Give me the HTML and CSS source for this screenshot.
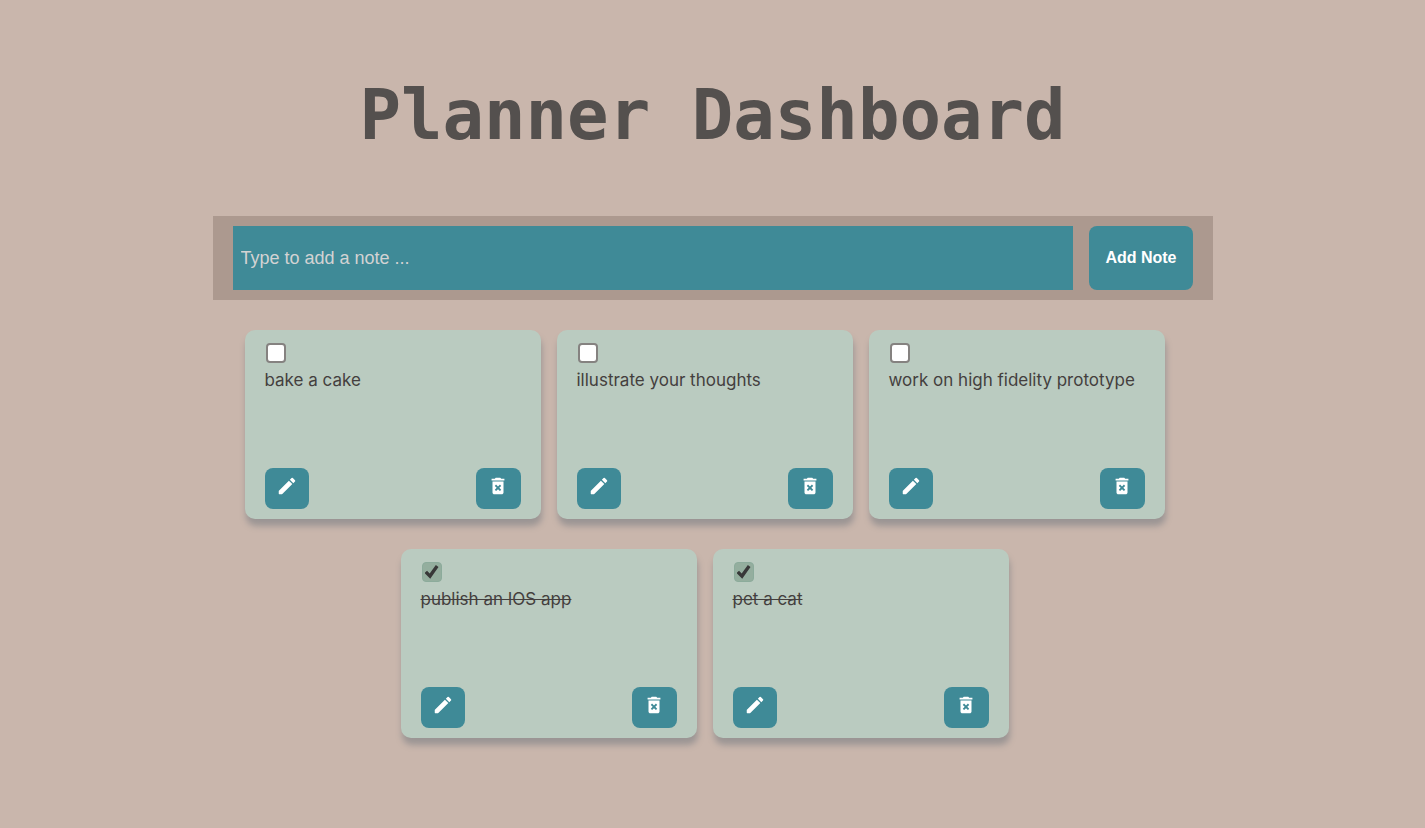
FILE: index.html
```html
<!DOCTYPE html>
<html lang="en">
<head>
<meta charset="utf-8">
<meta name="viewport" content="width=device-width, initial-scale=1">
<title>Planner Dashboard</title>
<link rel="stylesheet" href="styles.css">
</head>
<body>
<svg class="sprite" aria-hidden="true">
  <symbol id="pencil" viewBox="0 0 24 24"><path d="M3 17.460v3.040c0 .28.22.5.5.5h3.040c.13 0 .26-.05.35-.15L17.810 9.940l-3.750-3.750L3.150 17.100c-.1.1-.15.22-.15.36zM20.710 7.040a1 1 0 0 0 0-1.410l-2.340-2.340a1 1 0 0 0-1.410 0l-1.830 1.830 3.750 3.750 1.830-1.830z"/></symbol>
  <symbol id="trash" viewBox="0 0 24 24"><path d="M6 19c0 1.100.9 2 2 2h8c1.100 0 2-.9 2-2V7H6v12zm2.460-7.120 1.410-1.410L12 12.590l2.120-2.120 1.410 1.410L13.410 14l2.120 2.120-1.410 1.410L12 15.410l-2.120 2.120-1.410-1.410L10.590 14l-2.130-2.120zM15.500 4l-1-1h-5l-1 1H5v2h14V4z"/></symbol>
</svg>
<main class="planner">
  <h1 class="title">Planner Dashboard</h1>
  <form class="note-form">
    <input class="note-input" type="text" placeholder="Type to add a note ..." aria-label="New note">
    <button class="button add-button" type="button">Add Note</button>
  </form>
  <ul class="notes">
    <li class="note">
      <label class="note-label"><input class="note-check" type="checkbox"><span class="note-text">bake a cake</span></label>
      <div class="actions">
        <button class="button icon-button" type="button" aria-label="Edit"><svg class="icon"><use href="#pencil"/></svg></button>
        <button class="button icon-button delete-button" type="button" aria-label="Delete"><svg class="icon"><use href="#trash"/></svg></button>
      </div>
    </li>
    <li class="note">
      <label class="note-label"><input class="note-check" type="checkbox"><span class="note-text">illustrate your thoughts</span></label>
      <div class="actions">
        <button class="button icon-button" type="button" aria-label="Edit"><svg class="icon"><use href="#pencil"/></svg></button>
        <button class="button icon-button delete-button" type="button" aria-label="Delete"><svg class="icon"><use href="#trash"/></svg></button>
      </div>
    </li>
    <li class="note">
      <label class="note-label"><input class="note-check" type="checkbox"><span class="note-text">work on high fidelity prototype</span></label>
      <div class="actions">
        <button class="button icon-button" type="button" aria-label="Edit"><svg class="icon"><use href="#pencil"/></svg></button>
        <button class="button icon-button delete-button" type="button" aria-label="Delete"><svg class="icon"><use href="#trash"/></svg></button>
      </div>
    </li>
    <li class="note">
      <label class="note-label"><input class="note-check" type="checkbox" checked><span class="note-text">publish an IOS app</span></label>
      <div class="actions">
        <button class="button icon-button" type="button" aria-label="Edit"><svg class="icon"><use href="#pencil"/></svg></button>
        <button class="button icon-button delete-button" type="button" aria-label="Delete"><svg class="icon"><use href="#trash"/></svg></button>
      </div>
    </li>
    <li class="note">
      <label class="note-label"><input class="note-check" type="checkbox" checked><span class="note-text">pet a cat</span></label>
      <div class="actions">
        <button class="button icon-button" type="button" aria-label="Edit"><svg class="icon"><use href="#pencil"/></svg></button>
        <button class="button icon-button delete-button" type="button" aria-label="Delete"><svg class="icon"><use href="#trash"/></svg></button>
      </div>
    </li>
  </ul>
</main>
</body>
</html>
```
FILE: styles.css
```css
* {
  box-sizing: border-box;
}

body {
  margin: 0;
  background: #c9b6ac;
  color: #443f3e;
  font-family: Inter, "Liberation Sans", sans-serif;
}

.sprite {
  display: none;
}

.planner {
  max-width: 1000px;
  margin: 0 auto;
  padding-top: 76px;
}

.title {
  margin: 0 0 62px;
  color: #54504e;
  font: bold 69px/78px "DejaVu Sans Mono", monospace;
  text-align: center;
}

.note-form {
  display: flex;
  gap: 16px;
  padding: 10px 20px;
  background: #ac998f;
}

.note-input {
  flex: 1;
  min-width: 0;
  height: 64px;
  padding: 0 8px;
  border: 0;
  background: #3f8a97;
  color: #fff;
  font: 18px "Liberation Sans", sans-serif;
}

.note-input::placeholder {
  color: #d3d3d3;
}

.button {
  border: 0;
  border-radius: 8px;
  background: #3f8a97;
  color: #fff;
}

.add-button {
  padding: 0 16px;
  font: bold 16px "Liberation Sans", sans-serif;
}

.notes {
  display: flex;
  flex-wrap: wrap;
  justify-content: center;
  margin: 30px 0 0;
  padding: 0;
  list-style: none;
}

.note {
  display: flex;
  flex-direction: column;
  justify-content: space-between;
  width: 296px;
  min-height: 189px;
  margin: 0 16px 30px 0;
  padding: 12px 20px 10px;
  border-radius: 10px;
  background: #bacbc0;
  box-shadow: 1px 7px 6px #9b9594;
}

.note-label {
  display: flex;
  flex-direction: column;
  gap: 4px;
}

.note-check {
  display: grid;
  place-items: center;
  width: 20px;
  height: 20px;
  margin: 1px;
  appearance: none;
  border: 2px solid #858280;
  border-radius: 4px;
  background: #fff;
}

.note-check:checked {
  border: 1px solid #8cab9b;
  background: #94ae9e;
}

.note-check:checked::before {
  content: "";
  width: 14px;
  height: 14px;
  background: #383838;
  clip-path: polygon(0 58%, 18% 41%, 37% 60%, 81% 0, 100% 15%, 41% 98%);
}

.note-text {
  font-size: 17px;
  line-height: 24px;
}

.note-check:checked + .note-text {
  text-decoration: line-through;
}

.actions {
  display: flex;
  justify-content: space-between;
}

.icon-button {
  width: 44px;
  height: 41px;
  padding: 0 0 5px;
}

.delete-button {
  width: 45px;
}

.icon {
  display: block;
  width: 22px;
  height: 22px;
  margin: 0 auto;
  fill: currentColor;
}
```
